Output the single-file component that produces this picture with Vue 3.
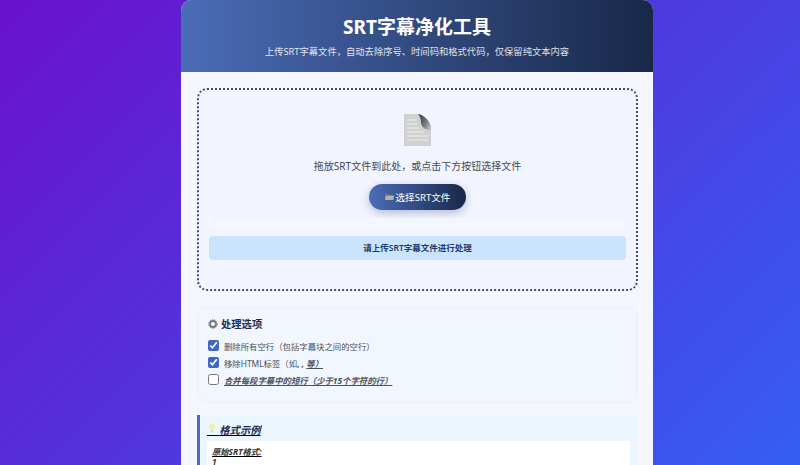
<template>
  <div class="page">
    <div class="card">
      <header class="header">
        <h1>SRT字幕净化工具</h1>
        <p>上传SRT字幕文件，自动去除序号、时间码和格式代码，仅保留纯文本内容</p>
      </header>

      <main class="content">
        <section class="dropzone">
          <svg class="doc-icon" viewBox="0 0 27 32" width="27" height="32">
            <defs>
              <linearGradient id="fold" x1="0.1" y1="0.2" x2="1" y2="0.8">
                <stop offset="0" stop-color="#3f4044" />
                <stop offset="0.55" stop-color="#77787c" />
                <stop offset="1" stop-color="#bdbec1" />
              </linearGradient>
            </defs>
            <path d="M0 0H14L27 14V32H0Z" fill="#d0d1d3" />
            <path d="M14 0C20 1 25 6 27 12V16C22 16 18 14 17 9C17 5 16 2 14 0Z" fill="url(#fold)" />
            <path d="M3 6H12M3 10H13M3 14H15M3 18H20M3 22H24M3 26H24" stroke="#e4e4e0" stroke-width="1.3" />
            <path d="M7 18H10M13 18H15M6 22H8M11 22H14" stroke="#f4efb4" stroke-width="1" />
          </svg>
          <p class="hint">拖放SRT文件到此处，或点击下方按钮选择文件</p>
          <button class="pick" type="button">
            <svg viewBox="0 0 12 10" width="9" height="8">
              <path d="M0 1H4L5 2H11V9H0Z" fill="#77766e" />
              <path d="M1 3.4H12L11 9H0Z" fill="#b4b3a8" />
            </svg>
            选择SRT文件
          </button>
          <div class="progress"></div>
          <div class="status">请上传SRT字幕文件进行处理</div>
        </section>

        <section class="options">
          <h3>
            <svg viewBox="0 0 12 12" width="10" height="10">
              <circle cx="6" cy="6" r="3.6" fill="none" stroke="#77797e" stroke-width="2.2" />
              <circle cx="6" cy="6" r="5.2" fill="none" stroke="#77797e" stroke-width="1.2" stroke-dasharray="1.4 1.4" />
            </svg>
            处理选项
          </h3>
          <label class="option">
            <input type="checkbox" checked />
            <span>删除所有空行（包括字幕块之间的空行）</span>
          </label>
          <label class="option">
            <input type="checkbox" checked />
            <span>移除HTML标签（如<b>, <i>, <u>等）</u></i></b></span>
          </label>
          <label class="option">
            <input type="checkbox" />
            <b><i><u>合并每段字幕中的短行（少于15个字符的行）</u></i></b>
          </label>
        </section>

        <section class="example">
          <h3>
            <span class="bulb-slot">&nbsp;&nbsp;&nbsp;
              <svg viewBox="0 0 10 12" width="8" height="10">
                <circle cx="5" cy="4.5" r="4" fill="#f8edb0" />
                <rect x="3.2" y="8.5" width="3.6" height="3" fill="#dcdccf" />
              </svg>
            </span>格式示例
          </h3>
          <div class="code">
            <div>原始SRT格式:</div>
            <div>1</div>
          </div>
        </section>
      </main>
    </div>
  </div>
</template>

<script setup>
</script>

<style>
html,
body {
  overflow: hidden;
}
</style>

<style scoped>
.page {
  height: 465px;
  padding-left: 181px;
  background: linear-gradient(135deg, #6a11cb 0%, #2575fc 100%) 0 0 / 100% 840px no-repeat;
  font-family: "Noto Sans", "Noto Sans CJK SC", sans-serif;
  overflow: hidden;
}

.card {
  width: 472px;
  height: 600px;
  background: #f6f6ff;
  border-radius: 10px 10px 0 0;
  overflow: hidden;
}

.header {
  height: 72px;
  box-sizing: border-box;
  padding-top: 14px;
  background: linear-gradient(to right, #4b6cb7, #182848);
  color: #fff;
  text-align: center;
}

.header h1 {
  margin: 0;
  font-size: 19px;
  line-height: 26px;
  font-weight: 700;
}

.header p {
  margin: 4px 0 0;
  font-size: 9.3px;
  line-height: 16px;
  opacity: 0.85;
}

.content {
  padding: 16px 15px 16px 16px;
}

.dropzone {
  height: 203px;
  box-sizing: border-box;
  border: 2px dotted #414d70;
  border-radius: 10px;
  background: #f2f4ff;
  padding: 24px 10px 0;
  display: flex;
  flex-direction: column;
  align-items: center;
}

.doc-icon {
  display: block;
}

.hint {
  margin: 12px 0 0;
  font-size: 10px;
  line-height: 16px;
  color: #444a55;
}

.pick {
  margin-top: 10px;
  width: 97px;
  height: 26px;
  border: none;
  border-radius: 13px;
  background: linear-gradient(to right, #4b6cb7, #182848);
  color: #fff;
  font: inherit;
  font-size: 9.6px;
  display: flex;
  align-items: center;
  justify-content: center;
  gap: 2px;
  box-shadow: 0 3px 8px rgba(40, 60, 120, 0.3);
}

.progress {
  align-self: stretch;
  height: 10px;
  margin-top: 8px;
  border-radius: 4px;
  background: #f3f7ff;
}

.status {
  align-self: stretch;
  height: 24px;
  margin-top: 8px;
  border-radius: 4px;
  background: #cbe4fe;
  color: #1e3a70;
  font-size: 8.5px;
  font-weight: 600;
  line-height: 24px;
  text-align: center;
}

.options {
  margin-top: 16px;
  height: 96px;
  box-sizing: border-box;
  padding: 8px 10px 0;
  background: #f1f6ff;
  border: 1px solid #ebf0fd;
  border-radius: 10px;
}

.options h3 {
  margin: 0 0 5px;
  font-size: 10.3px;
  line-height: 16px;
  color: #1d2b50;
  font-weight: 700;
  display: flex;
  align-items: center;
  gap: 3px;
}

.option {
  display: flex;
  align-items: center;
  gap: 5px;
  height: 17px;
  font-size: 8.4px;
  color: #4d5158;
}

.option input {
  width: 11px;
  height: 11px;
  margin: 0;
  accent-color: #3f66c4;
}

.example {
  margin-top: 12px;
  height: 120px;
  box-sizing: border-box;
  padding: 7px 8px 0 7px;
  background: #ebf6ff;
  border-left: 3px solid #4b6cb7;
  font-weight: 700;
  font-style: italic;
  text-decoration: underline;
}

.example h3 {
  margin: 0 0 3px;
  font-size: 10.3px;
  line-height: 16px;
  color: #1d2b50;
}

.bulb-slot {
  position: relative;
  letter-spacing: 0.4px;
}

.bulb-slot svg {
  position: absolute;
  left: 1px;
  top: 0;
}

.code {
  background: #fff;
  padding: 6px 5px 5px;
  font-size: 8.3px;
  line-height: 10px;
  color: #333;
}
</style>
